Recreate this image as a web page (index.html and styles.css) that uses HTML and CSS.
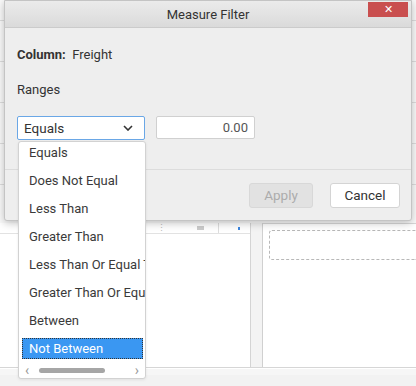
FILE: index.html
```html
<!DOCTYPE html>
<html lang="en">

<head>
  <meta charset="UTF-8" />
  <title>Measure Filter</title>
  <link rel="stylesheet" href="styles.css">
</head>

<body>
  <div class="app">
    <div class="grid-area">
      <div class="grid-line"></div>
      <div class="grid-line"></div>
      <div class="grid-line"></div>
      <div class="grid-line"></div>
      <div class="grid-line"></div>
    </div>
    <div class="panels">
      <div class="panel-left">
        <div class="panel-tools">
          <span class="tool-dots">⋮</span>
          <span class="tool-grid"></span>
          <span class="tool-sep"></span>
          <span class="tool-dot"></span>
        </div>
      </div>
      <div class="splitter"></div>
      <div class="panel-right">
        <div class="drop-zone"></div>
      </div>
    </div>
    <div class="status"></div>
  </div>

  <div class="dialog">
    <div class="dialog-head">
      <span class="dialog-title">Measure Filter</span>
      <button class="btn-close">&#x2715;</button>
    </div>
    <div class="dialog-body">
      <div class="field-line"><b>Column:</b>&nbsp; Freight</div>
      <div class="field-line ranges">Ranges</div>
      <div class="range-row">
        <div class="select">
          <span>Equals</span>
          <svg width="10" height="6" viewBox="0 0 10 6">
            <path d="M1 1 L5 5 L9 1" fill="none" stroke="#333" stroke-width="1.6" />
          </svg>
        </div>
        <div class="value">0.00</div>
      </div>
    </div>
    <div class="dialog-foot">
      <button class="btn btn-apply" disabled>Apply</button>
      <button class="btn btn-cancel">Cancel</button>
    </div>
  </div>

  <div class="popup">
    <ul class="options">
      <li>Equals</li>
      <li>Does Not Equal</li>
      <li>Less Than</li>
      <li>Greater Than</li>
      <li>Less Than Or Equal To</li>
      <li>Greater Than Or Equal To</li>
      <li>Between</li>
      <li class="selected">Not Between</li>
    </ul>
    <div class="hscroll">
      <span class="arrow">&#x2039;</span>
      <span class="track"><span class="thumb"></span></span>
      <span class="arrow">&#x203A;</span>
    </div>
  </div>
</body>

</html>
```

FILE: styles.css
```css
body {
  margin: 0;
  width: 416px;
  height: 386px;
  overflow: hidden;
  font-family: Roboto, 'Liberation Sans', sans-serif;
  font-size: 13px;
  color: #333;
  position: relative;
}

.app {
  display: flex;
  flex-direction: column;
  height: 386px;
  background: #fafafa;
}

.grid-area {
  height: 223px;
  display: flex;
  flex-direction: column;
  gap: 40px;
  padding-top: 20px;
  box-sizing: border-box;
}

.grid-line {
  height: 1px;
  background: #dedede;
}

.panels {
  flex: 1;
  display: flex;
  border-bottom: 1px solid #d6d6d6;
}

.panel-left {
  width: 250px;
  background: #fff;
  border-right: 1px solid #d4d4d4;
}

.panel-tools {
  height: 10px;
  border-bottom: 1px solid #e2e2e2;
  display: flex;
  align-items: center;
  padding-left: 157px;
  gap: 0;
  font-size: 9px;
  color: #bbb;
}

.tool-grid {
  width: 7px;
  height: 4px;
  background: #ccc;
  margin-left: 31px;
}

.tool-sep {
  width: 1px;
  height: 10px;
  background: #ddd;
  margin-left: 14px;
}

.tool-dot {
  width: 2px;
  height: 3px;
  background: #3b86e0;
  margin-left: 19px;
}

.splitter {
  width: 11px;
  background: #f3f3f3;
}

.panel-right {
  flex: 1;
  background: #fff;
  border-left: 1px solid #d0d0d0;
  border-top: 1px solid #d8d8d8;
  padding: 6px 0 0 6px;
}

.drop-zone {
  height: 28px;
  border: 1px dashed #b8b8b8;
  border-right: none;
  border-radius: 3px 0 0 3px;
}

.status {
  height: 17px;
  background: #f2f2f2;
  border-top: 1px solid #fff;
  box-shadow: inset 0 6px 0 #f6f6f6;
}

/* dialog */
.dialog {
  position: absolute;
  left: 4px;
  top: 0;
  width: 408px;
  height: 221px;
  box-sizing: border-box;
  background: #eeeeee;
  border: 1px solid #c4c4c4;
  border-radius: 0 0 3px 3px;
  box-shadow: 0 2px 8px rgba(0, 0, 0, 0.25);
  display: flex;
  flex-direction: column;
}

.dialog-head {
  height: 26px;
  flex-shrink: 0;
  background: linear-gradient(#ebebeb, #dadada);
  border-bottom: 1px solid #cbcbcb;
  display: flex;
  align-items: center;
  justify-content: center;
  position: relative;
}

.dialog-title {
  color: #333;
}

.btn-close {
  position: absolute;
  right: 3px;
  top: 1px;
  width: 40px;
  height: 15px;
  border: none;
  background: #c94f4f;
  color: #fff;
  font-size: 11px;
  font-weight: 300;
  line-height: 15px;
  padding: 0;
}

.dialog-body {
  flex: 1;
  padding: 19px 12px 0;
  border-bottom: 1px solid #dcdcdc;
}

.field-line {
  line-height: 16px;
}

.field-line b {
  font-weight: 700;
}

.ranges {
  margin-top: 19px;
}

.range-row {
  margin-top: 18px;
  display: flex;
  gap: 11px;
}

.select {
  width: 128px;
  height: 24px;
  box-sizing: border-box;
  background: #fff;
  border: 1px solid #6aa7e6;
  border-radius: 2px;
  display: flex;
  align-items: center;
  justify-content: space-between;
  padding: 0 11px 0 6px;
  font-size: 13.5px;
}

.value {
  width: 99px;
  height: 23px;
  box-sizing: border-box;
  background: #fff;
  border: 1px solid #d0d0d0;
  border-radius: 2px;
  text-align: right;
  padding-right: 6px;
  line-height: 21px;
  color: #555;
}

.dialog-foot {
  height: 50px;
  flex-shrink: 0;
  display: flex;
  align-items: center;
  justify-content: flex-end;
  gap: 17px;
  padding-right: 11px;
}

.btn {
  height: 25px;
  font-family: inherit;
  font-size: 13.5px;
  border-radius: 3px;
  padding: 0;
}

.btn-apply {
  width: 64px;
  background: #e2e2e2;
  border: 1px solid #d8d8d8;
  color: #acacac;
}

.btn-cancel {
  width: 70px;
  background: #fff;
  border: 1px solid #d4d4d4;
  color: #333;
}

/* dropdown popup */
.popup {
  position: absolute;
  left: 18px;
  top: 141px;
  width: 128px;
  height: 238px;
  box-sizing: border-box;
  background: #fff;
  border: 1px solid #d2d2d2;
  border-radius: 3px;
  box-shadow: 0 1px 3px rgba(0, 0, 0, 0.08);
  display: flex;
  flex-direction: column;
  overflow: hidden;
}

.options {
  list-style: none;
  margin: 0;
  padding: 0 0 0 3px;
  white-space: nowrap;
}

.options li {
  height: 21px;
  line-height: 21px;
  margin-bottom: 7px;
  padding-left: 7px;
  font-size: 13px;
  color: #3a3a3a;
}

.options li.selected {
  background: #3a97f2;
  color: #fff;
  outline: 1px dotted #333;
  outline-offset: -1px;
  margin-right: 2px;
}

.hscroll {
  display: flex;
  align-items: center;
  height: 18px;
  margin-top: -4px;
  padding: 0 6px;
  gap: 10px;
  color: #999;
  font-size: 14px;
}

.track {
  flex: 1;
  height: 5px;
  display: flex;
}

.thumb {
  width: 66px;
  height: 5px;
  border-radius: 3px;
  background: #a6a6a6;
}
```
